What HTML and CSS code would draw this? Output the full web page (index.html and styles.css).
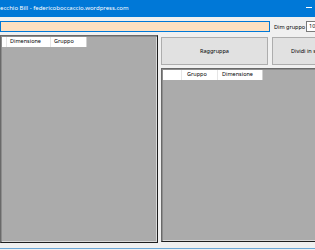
FILE: index.html
```html
<!DOCTYPE html>
<html lang="it">
<head>
    <meta charset="UTF-8">
    <meta name="viewport" content="width=device-width, initial-scale=1.0">
    <title>Specchio Bill</title>
    <link rel="stylesheet" href="styles.css">
</head>
<body>
    <div class="window">
        <div class="titlebar">
            <span class="title">ecchio Bill - federicoboccaccio.wordpress.com</span>
            <span class="min-btn"></span>
        </div>
        <div class="client">
            <div class="toolbar">
                <div class="field path"></div>
                <span class="label">Dim gruppo</span>
                <div class="field num">10</div>
            </div>
            <div class="main">
                <div class="list list-left">
                    <div class="list-head">
                        <span class="col col-first-l"></span>
                        <span class="col col-dim-l">Dimensione</span>
                        <span class="col col-grp-l">Gruppo</span>
                    </div>
                </div>
                <div class="side">
                    <div class="buttons">
                        <button class="btn">Raggruppa</button>
                        <button class="btn btn-split">Dividi in sottogruppi</button>
                    </div>
                    <div class="list list-right">
                        <div class="list-head">
                            <span class="col col-first-r"></span>
                            <span class="col col-grp-r">Gruppo</span>
                            <span class="col col-dim-r">Dimensione</span>
                        </div>
                    </div>
                </div>
            </div>
        </div>
        <div class="frame-bottom"></div>
    </div>
</body>
</html>
```

FILE: styles.css
```css
body {
    margin: 0;
    padding: 0;
    font-family: "Noto Sans", "Open Sans", sans-serif;
    background-color: #f0f0f0;
    overflow: hidden;
}
.window {
    width: 315px;
    height: 250px;
    display: flex;
    flex-direction: column;
    overflow: hidden;
}
.titlebar {
    height: 17px;
    flex-shrink: 0;
    background-color: #0078d7;
    color: #fff;
    display: flex;
    align-items: center;
    justify-content: space-between;
}
.title {
    font-size: 6px;
    white-space: nowrap;
    padding-bottom: 1px;
}
.min-btn {
    width: 6px;
    height: 1px;
    background-color: #fff;
    margin-right: 3px;
    margin-bottom: 2px;
}
.client {
    flex: 1;
    display: flex;
    flex-direction: column;
    min-height: 0;
}
.toolbar {
    margin-top: 4px;
    height: 11px;
    display: flex;
    align-items: center;
    white-space: nowrap;
}
.field {
    box-sizing: border-box;
    height: 11px;
    flex-shrink: 0;
}
.path {
    width: 270px;
    background-color: #fee0c0;
    border: 1px solid #0078d7;
}
.label {
    font-size: 5.5px;
    margin-left: 4px;
    width: 32px;
    flex-shrink: 0;
}
.num {
    width: 30px;
    background-color: #fff;
    border: 1px solid #7a7a7a;
    font-size: 5.5px;
    line-height: 9px;
    padding-left: 2px;
}
.main {
    margin-top: 3px;
    height: 208px;
    display: flex;
}
.list {
    box-sizing: border-box;
    background-color: #ababab;
    border: 1px solid #696969;
    border-right-color: #1e1e1e;
    border-bottom-color: #1e1e1e;
    box-shadow: inset 1px 1px 0 #8c8c8c, inset -1px -1px 0 #d8d8d8;
    padding: 1px;
}
.list-left {
    width: 158px;
    flex-shrink: 0;
}
.side {
    margin-left: 3px;
    flex: 1;
    display: flex;
    flex-direction: column;
    min-width: 0;
}
.buttons {
    margin-top: 2px;
    height: 28px;
    display: flex;
    gap: 4px;
    flex-shrink: 0;
}
.btn {
    width: 107px;
    flex-shrink: 0;
    background-color: #e1e1e1;
    border: 1px solid #adadad;
    font-family: "Noto Sans", "Open Sans", sans-serif;
    font-size: 5.5px;
    color: #000;
    padding: 0;
    white-space: nowrap;
}
.btn-split {
    text-align: left;
    padding-left: 18px;
}
.list-right {
    margin-top: 3px;
    height: 174px;
    width: 160px;
}
.list-head {
    display: flex;
    height: 10px;
}
.col {
    box-sizing: border-box;
    height: 10px;
    background-color: #fff;
    border-right: 1px solid #e5e5e5;
    font-size: 5.5px;
    line-height: 9px;
    padding-left: 3px;
    white-space: nowrap;
    color: #000;
}
.col-first-l { width: 5px; padding: 0; }
.col-dim-l { width: 44px; }
.col-grp-l { width: 36px; border-right-color: #d0d0d0; }
.col-first-r { width: 19px; padding: 0; }
.col-grp-r { width: 36px; padding-left: 5px; }
.col-dim-r { width: 45px; padding-left: 4px; border-right-color: #d0d0d0; }
.frame-bottom {
    height: 1px;
    margin-bottom: 1px;
    background-color: #6aa6d6;
    flex-shrink: 0;
}
```
